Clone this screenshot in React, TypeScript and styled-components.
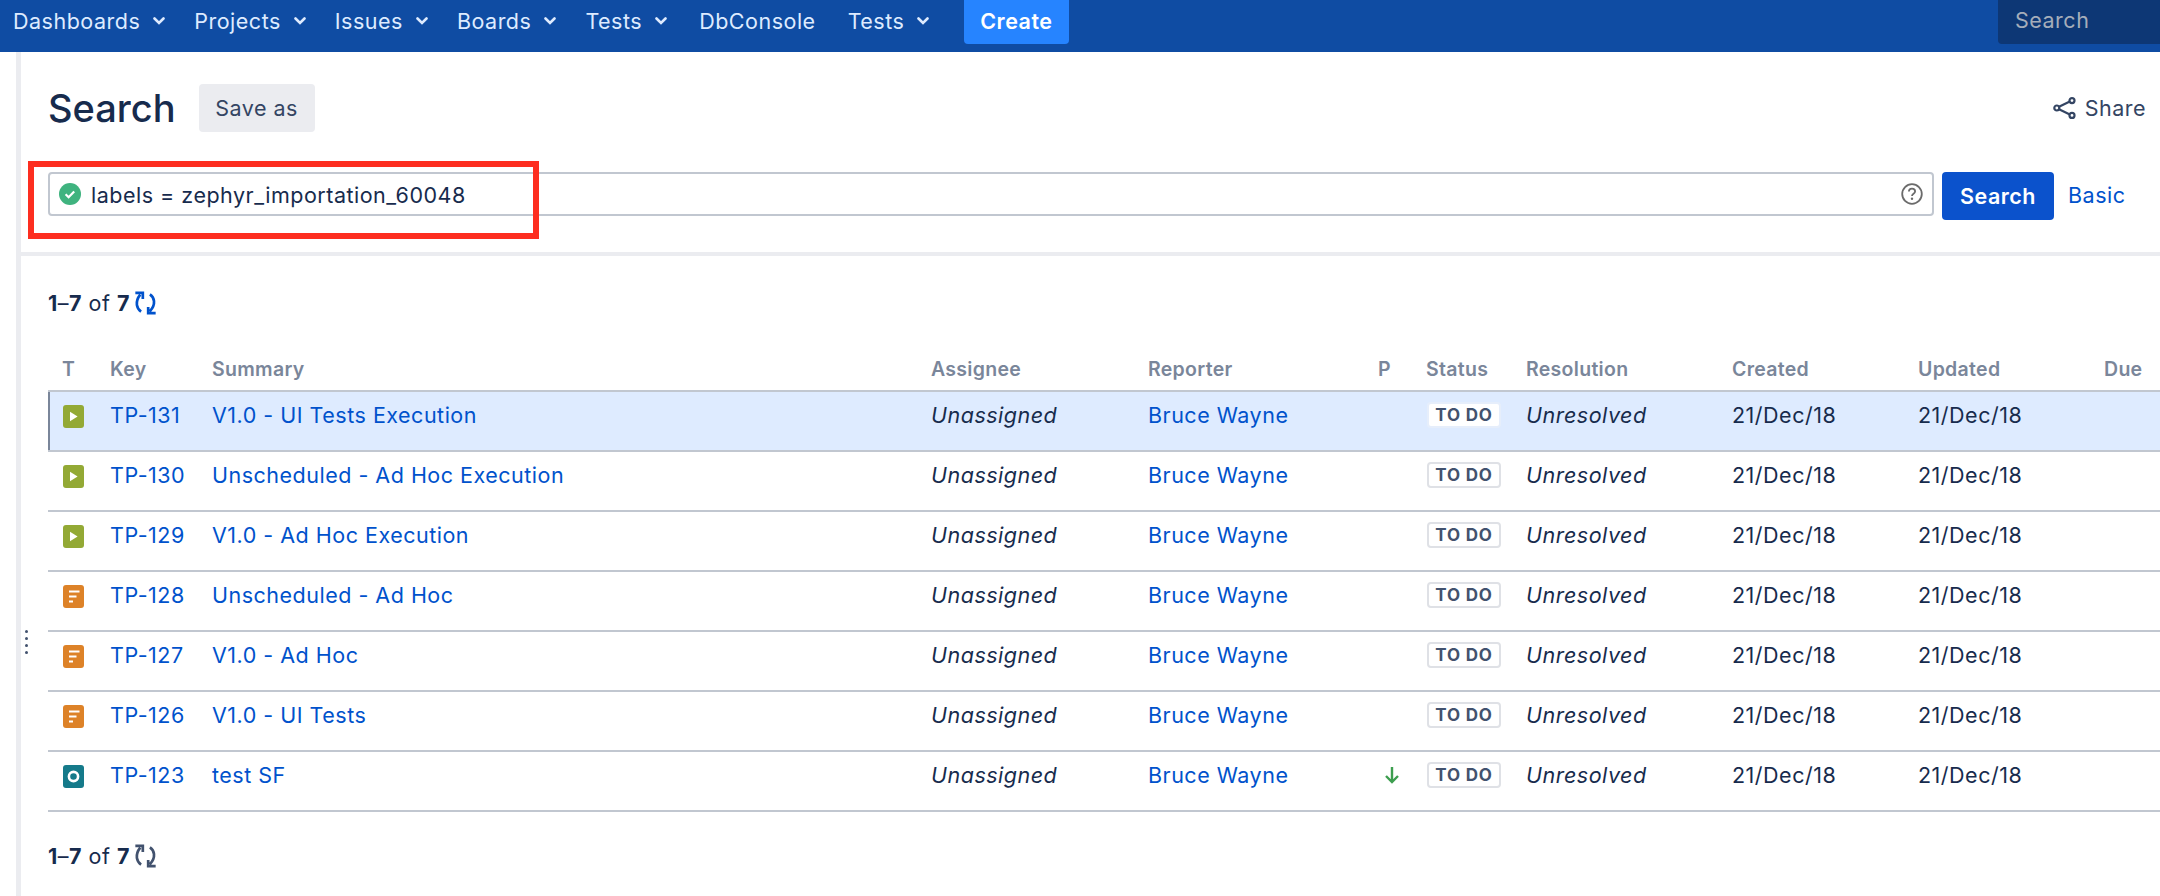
import React from 'react'
import styled, { createGlobalStyle } from 'styled-components'

const GlobalStyle = createGlobalStyle`
	html, body {
		margin: 0;
		padding: 0;
		background: #fff;
		overflow: hidden;
	}
	body {
		font-family: Inter, "Liberation Sans", sans-serif;
		color: #172b4d;
		-webkit-font-smoothing: antialiased;
	}
`

const Page = styled.div`
	width: 2160px;
	height: 896px;
	overflow: hidden;
	position: relative;
	font-size: 21.5px;
	letter-spacing: 0.5px;
`

/* top navigation */
const NavBar = styled.nav`
	height: 52px;
	background: #0f4ca3;
	display: flex;
	align-items: flex-start;
	justify-content: space-between;
`

const NavLeft = styled.div`
	display: flex;
	align-items: center;
	height: 44px;
`

const NavItem = styled.div<{ $plain?: boolean }>`
	display: flex;
	align-items: center;
	gap: 13px;
	height: 38px;
	margin-bottom: 2px;
	padding: ${(p) => (p.$plain ? '0 19px 0 16px' : '0 16px 0 13px')};
	color: #deebff;
	white-space: nowrap;
`

const CreateButton = styled.div`
	width: 105px;
	height: 44px;
	box-sizing: border-box;
	padding-bottom: 2px;
	margin-left: 18.5px;
	display: flex;
	align-items: center;
	justify-content: center;
	background: #2684ff;
	color: #fff;
	font-weight: 600;
	border-radius: 0 0 4px 4px;
`

const NavSearch = styled.div`
	width: 162px;
	height: 44px;
	padding: 0 0 4px 17px;
	box-sizing: border-box;
	display: flex;
	align-items: center;
	background: #0d3775;
	color: #a5adba;
	border-radius: 0 0 0 4px;
`

/* page body */
const Main = styled.main`
	margin-left: 16px;
	border-left: 5px solid #ebecf0;
	height: 844px;
`

const SplitterDots = styled.div`
	position: absolute;
	left: 25px;
	top: 630px;
	display: grid;
	gap: 4px;
`

const Dot = styled.span`
	width: 3px;
	height: 3px;
	border-radius: 50%;
	background: #42526e;
`

const SearchHeader = styled.section`
	position: relative;
	padding: 32px 0 32px 27px;
	border-bottom: 4px solid #ebecf0;
`

const TitleRow = styled.div`
	display: flex;
	align-items: center;
	justify-content: space-between;
	height: 48px;
	margin-bottom: 40px;
`

const TitleGroup = styled.div`
	display: flex;
	align-items: center;
	gap: 23px;
`

const Title = styled.h1`
	margin: 0;
	font-size: 38px;
	font-weight: 500;
	letter-spacing: 0;
	color: #172b4d;
`

const SaveButton = styled.div`
	width: 116px;
	height: 48px;
	display: flex;
	align-items: center;
	justify-content: center;
	background: #ebecf0;
	border-radius: 4px;
	color: #344563;
`

const ShareLink = styled.div`
	display: flex;
	align-items: center;
	gap: 9px;
	padding-right: 14px;
	color: #344563;
`

const QueryRow = styled.div`
	display: flex;
	align-items: flex-start;
	height: 48px;
`

const QueryInput = styled.div`
	flex: 1;
	height: 44px;
	box-sizing: border-box;
	border: 2px solid #c1c7d0;
	border-radius: 4px;
	display: flex;
	align-items: center;
	padding: 0 9px;
	gap: 10px;
	color: #172b4d;
`

const QueryText = styled.span`
	flex: 1;
	padding-top: 2px;
`

const SearchButton = styled.div`
	width: 112px;
	height: 48px;
	margin-left: 8px;
	display: flex;
	align-items: center;
	justify-content: center;
	background: #0b52cc;
	border-radius: 4px;
	color: #fff;
	font-weight: 600;
`

const BasicLink = styled.a`
	margin: 10px 36px 0 14px;
	width: 56px;
	color: #0052cc;
`

const Highlight = styled.div`
	position: absolute;
	left: 7px;
	top: 109px;
	width: 511px;
	height: 78px;
	box-sizing: border-box;
	border: 6px solid #fd2e20;
	pointer-events: none;
`

const Results = styled.section`
	padding: 33px 0 0 27px;
`

const Pagination = styled.div<{ $bottom?: boolean }>`
	display: flex;
	align-items: center;
	gap: 4px;
	height: 28px;
	margin-top: ${(p) => (p.$bottom ? '30px' : '0')};
	margin-bottom: ${(p) => (p.$bottom ? '0' : '40px')};
	color: #172b4d;
`

const PageCount = styled.span`
	white-space: pre;
	b {
		font-weight: 700;
	}
`

const COLUMNS = '48px 102px 719px 217px 230px 48px 100px 206px 186px 186px 56px'

const HeaderRow = styled.div`
	display: grid;
	grid-template-columns: ${COLUMNS};
	padding: 0 0 9px 14px;
	border-bottom: 2px solid #c1c7d0;
	color: #7a869a;
	font-size: 19.5px;
	font-weight: 600;
	letter-spacing: 0.3px;
	line-height: 24px;
`

const IssueRow = styled.div<{ $selected?: boolean }>`
	display: grid;
	grid-template-columns: ${COLUMNS};
	height: 60px;
	box-sizing: border-box;
	padding: 10px 0 0 14px;
	border-bottom: 2px solid #c1c7d0;
	background: ${(p) => (p.$selected ? '#deebff' : '#fff')};
	box-shadow: ${(p) => (p.$selected ? 'inset 2px 0 0 #7a869a' : 'none')};
	line-height: 27px;
	white-space: nowrap;
`

const Cell = styled.div<{ $italic?: boolean }>`
	font-style: ${(p) => (p.$italic ? 'italic' : 'normal')};
	color: #172b4d;
`

const LinkCell = styled.a`
	color: #0052cc;
`

const TypeCell = styled.div`
	padding: 3px 0 0 1px;
`

const PriorityCell = styled.div`
	padding: 3px 0 0 6px;
`

const Lozenge = styled.span<{ $selected?: boolean }>`
	display: flex;
	align-items: center;
	justify-content: center;
	width: 74px;
	height: 26px;
	margin-left: 1px;
	box-sizing: border-box;
	background: #fff;
	border: 2px solid ${(p) => (p.$selected ? '#e6eefb' : '#dfe1e6')};
	border-radius: 4px;
	color: #42526e;
	font-size: 17px;
	font-weight: 700;
	letter-spacing: 0.8px;
`

type IssueKind = 'execution' | 'test' | 'other'

function IssueIcon({ kind }: { kind: IssueKind }) {
	const fill = kind === 'execution' ? '#93a935' : kind === 'test' ? '#dd8228' : '#157a8a'
	return (
		<svg width="21" height="23" viewBox="0 0 21 23" style={{ display: 'block' }}>
			<rect width="21" height="23" rx="3" fill={fill} />
			{kind === 'execution' && <path d="M7 6.8v9.4l7.6-4.7z" fill="#fff" />}
			{kind === 'test' && (
				<path d="M6 6.5h10.5M6 11.5h7.5M6 16.5h4" stroke="#fff" strokeWidth="2" fill="none" />
			)}
			{kind === 'other' && <circle cx="10.5" cy="11.5" r="4.6" stroke="#fff" strokeWidth="2.6" fill="none" />}
		</svg>
	)
}

const Chevron = () => (
	<svg width="12" height="8" viewBox="0 0 12 8">
		<path d="M1.5 1.5 6 6l4.5-4.5" stroke="#deebff" strokeWidth="2.6" fill="none" strokeLinecap="round" />
	</svg>
)

const RefreshIcon = ({ color }: { color: string }) => (
	<svg width="23" height="24" viewBox="0 0 24 24" fill="none" stroke={color} strokeWidth="2.8">
		<path d="M7.4 21C3 18 0.4 11 6.5 3.2M1.4 1.4h7.8v6.4" />
		<path d="M16.6 3c4.4 3 7 10-0.1 17.8M22.6 22.6h-7.8v-6.4" />
	</svg>
)

const ShareIcon = () => (
	<svg width="23" height="22" viewBox="0 0 23 22" fill="none" stroke="#344563" strokeWidth="2.2">
		<circle cx="3.8" cy="11" r="2.5" />
		<circle cx="19" cy="3.6" r="2.5" />
		<circle cx="19" cy="18.4" r="2.5" />
		<path d="M6 9.8l10.8-5.2M6 12.2l10.8 5.2" />
	</svg>
)

const ValidIcon = () => (
	<svg width="22" height="22" viewBox="0 0 22 22" style={{ flexShrink: 0 }}>
		<circle cx="11" cy="11" r="11" fill="#3fb37f" />
		<path d="M6.6 11.2l3 3 5.6-5.8" stroke="#fff" strokeWidth="2.2" fill="none" />
	</svg>
)

const HelpIcon = () => (
	<svg width="22" height="22" viewBox="0 0 22 22" fill="none" style={{ flexShrink: 0 }}>
		<circle cx="11" cy="11" r="9.8" stroke="#6b6b6b" strokeWidth="1.8" />
		<path d="M7.9 8.6c0-1.9 1.4-3 3.1-3s3.1 1.1 3.1 2.8c0 2.4-3.1 2.4-3.1 4.6" stroke="#6b6b6b" strokeWidth="1.8" />
		<circle cx="11" cy="15.8" r="1.2" fill="#6b6b6b" />
	</svg>
)

const LowPriorityIcon = () => (
	<svg width="16" height="20" viewBox="0 0 16 20" fill="none" stroke="#3d9e4f" strokeWidth="2.4" style={{ display: 'block' }}>
		<path d="M8 2v15M2 11l6 6 6-6" />
	</svg>
)

const navItems = [
	{ label: 'Dashboards', menu: true },
	{ label: 'Projects', menu: true },
	{ label: 'Issues', menu: true },
	{ label: 'Boards', menu: true },
	{ label: 'Tests', menu: true },
	{ label: 'DbConsole', menu: false },
	{ label: 'Tests', menu: true },
]

const columnTitles = ['T', 'Key', 'Summary', 'Assignee', 'Reporter', 'P', 'Status', 'Resolution', 'Created', 'Updated', 'Due']

const issues: { key: string; summary: string; kind: IssueKind; priority?: boolean }[] = [
	{ key: 'TP-131', summary: 'V1.0 - UI Tests Execution', kind: 'execution' },
	{ key: 'TP-130', summary: 'Unscheduled - Ad Hoc Execution', kind: 'execution' },
	{ key: 'TP-129', summary: 'V1.0 - Ad Hoc Execution', kind: 'execution' },
	{ key: 'TP-128', summary: 'Unscheduled - Ad Hoc', kind: 'test' },
	{ key: 'TP-127', summary: 'V1.0 - Ad Hoc', kind: 'test' },
	{ key: 'TP-126', summary: 'V1.0 - UI Tests', kind: 'test' },
	{ key: 'TP-123', summary: 'test SF', kind: 'other', priority: true },
]

export default function App() {
	return (
		<Page>
			<GlobalStyle />
			<NavBar>
				<NavLeft>
					{navItems.map((item, i) => (
						<NavItem key={i} $plain={!item.menu}>
							{item.label}
							{item.menu && <Chevron />}
						</NavItem>
					))}
					<CreateButton>Create</CreateButton>
				</NavLeft>
				<NavSearch>Search</NavSearch>
			</NavBar>
			<Main>
				<SearchHeader>
					<TitleRow>
						<TitleGroup>
							<Title>Search</Title>
							<SaveButton>Save as</SaveButton>
						</TitleGroup>
						<ShareLink>
							<ShareIcon />
							Share
						</ShareLink>
					</TitleRow>
					<QueryRow>
						<QueryInput>
							<ValidIcon />
							<QueryText>labels = zephyr_importation_60048</QueryText>
							<HelpIcon />
						</QueryInput>
						<SearchButton>Search</SearchButton>
						<BasicLink>Basic</BasicLink>
					</QueryRow>
					<Highlight />
				</SearchHeader>
				<Results>
					<Pagination>
						<PageCount>
							<b>1</b>–<b>7</b> of <b>7</b>
						</PageCount>
						<RefreshIcon color="#0052cc" />
					</Pagination>
					<HeaderRow>
						{columnTitles.map((title) => (
							<div key={title}>{title}</div>
						))}
					</HeaderRow>
					{issues.map((issue, i) => (
						<IssueRow key={issue.key} $selected={i === 0}>
							<TypeCell>
								<IssueIcon kind={issue.kind} />
							</TypeCell>
							<LinkCell>{issue.key}</LinkCell>
							<LinkCell>{issue.summary}</LinkCell>
							<Cell $italic>Unassigned</Cell>
							<LinkCell>Bruce Wayne</LinkCell>
							<PriorityCell>{issue.priority && <LowPriorityIcon />}</PriorityCell>
							<div>
								<Lozenge $selected={i === 0}>TO DO</Lozenge>
							</div>
							<Cell $italic>Unresolved</Cell>
							<Cell>21/Dec/18</Cell>
							<Cell>21/Dec/18</Cell>
							<div />
						</IssueRow>
					))}
					<Pagination $bottom>
						<PageCount>
							<b>1</b>–<b>7</b> of <b>7</b>
						</PageCount>
						<RefreshIcon color="#42526e" />
					</Pagination>
				</Results>
			</Main>
			<SplitterDots>
				<Dot />
				<Dot />
				<Dot />
				<Dot />
			</SplitterDots>
		</Page>
	)
}
